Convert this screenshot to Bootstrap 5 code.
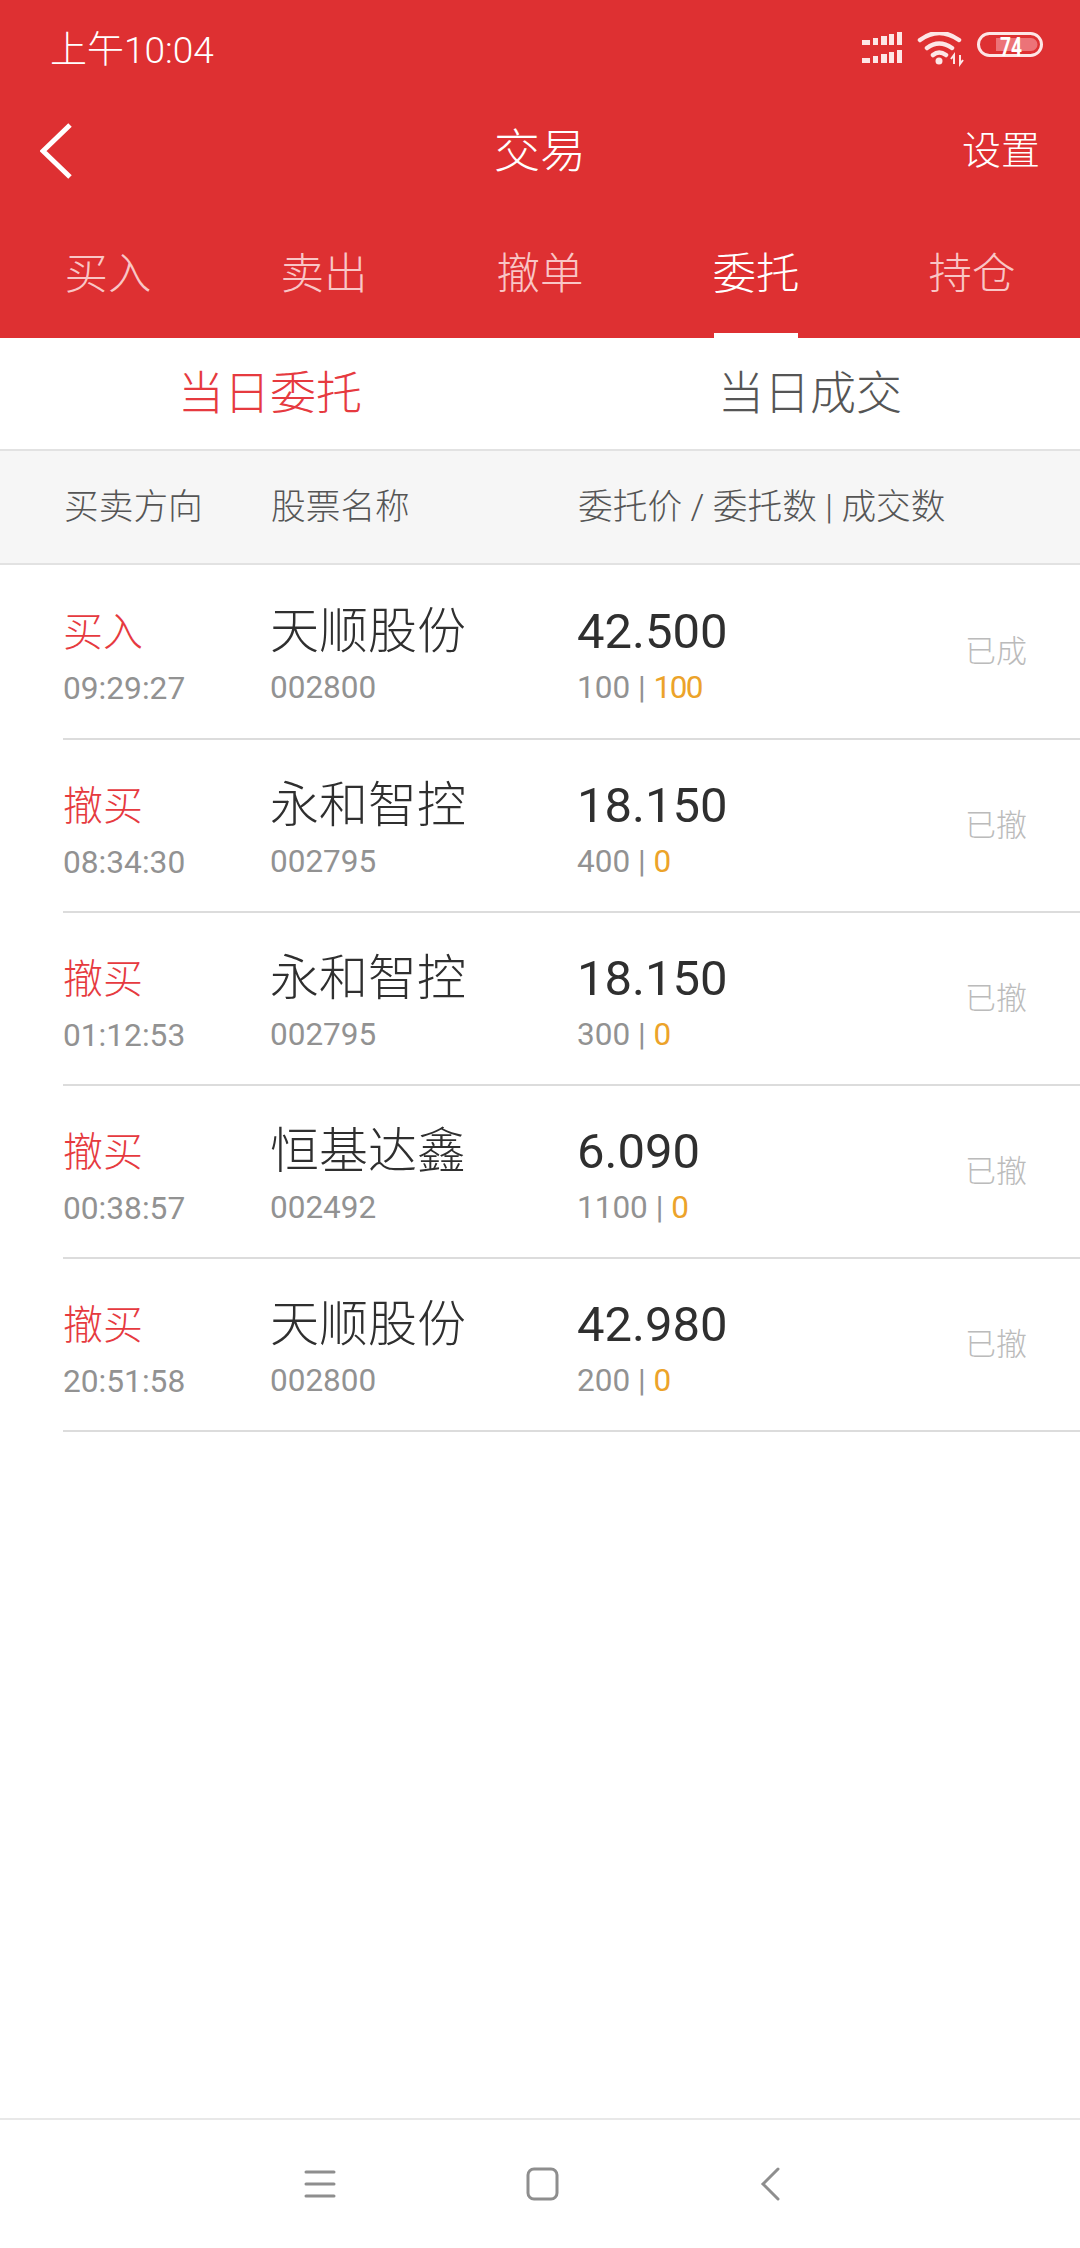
<!DOCTYPE html>
<html lang="zh-CN">
<head>
  <meta charset="UTF-8">
  <meta name="viewport" content="width=device-width, initial-scale=1">
  <title>交易</title>
  <link href="https://cdn.jsdelivr.net/npm/bootstrap@5.3.0/dist/css/bootstrap.min.css" rel="stylesheet">
  <style>
    body { width: 1080px; height: 2248px; overflow: hidden; background: #fff; font-family: Roboto, "Noto Sans CJK SC", sans-serif; font-weight: 300; }
    .app-head { background: #de3032; color: #fff; height: 338px; }
    .status-bar { height: 100px; padding: 0 36px 0 50px; font-size: 37px; line-height: 1; }
    .status-icons { margin-top: 6px; }
    .title-bar { height: 102px; padding: 0 40px; }
    .title-side { width: 200px; }
    .title-text { font-size: 46px; line-height: 1; }
    .title-set { font-size: 39px; line-height: 1; }
    .tab-row { height: 136px; }
    .tab-item { width: 216px; font-size: 43.500px; line-height: 1; color: #f9c6c6; }
    .tab-mark { width: 84px; height: 5px; margin: 37px auto 0; }
    .tab-on { color: #fff; }
    .tab-on .tab-mark { background: #fff; }
    .sub-tabs { height: 113px; border-bottom: 2px solid #e2e2e2; font-size: 46px; color: #555; }
    .sub-on { color: #e63a3f; }
    .col-a { width: 207px; flex: none; padding-top: 13px; }
    .col-b { width: 307px; flex: none; padding-top: 7px; }
    .col-c { flex: 1; padding-top: 7px; }
    .list-head { height: 114px; padding-left: 64px; background: #f6f6f6; border-bottom: 2px solid #e2e2e2; font-size: 34.700px; color: #555; }
    .order-row { height: 173px; margin-left: 63px; border-bottom: 2px solid #dcdcdc; }
    .order-row:first-of-type { height: 175px; }
    .side-text { font-size: 40px; line-height: 48px; color: #e63a3f; }
    .name-text { font-size: 49px; line-height: 58px; color: #2f2f2f; }
    .price-text { font-size: 49px; line-height: 58px; color: #2f2f2f; font-weight: 400; }
    .sub-text { font-size: 31.500px; line-height: 38px; color: #929292; margin-top: 8px; font-weight: 400; }
    .time-text { font-size: 31.700px; margin-top: 13px; }
    .deal-num { color: #eca32a; letter-spacing: -1.500px; }
    .state-text { font-size: 31px; line-height: 1; color: #bbb; width: 119px; padding-right: 53px; flex: none; white-space: nowrap; text-align: right; }
    .soft-bar { height: 130px; border-top: 2px solid #e8e8e8; }
  </style>
</head>
<body class="d-flex flex-column">
  <!-- 顶部红色区域 -->
  <div class="app-head">
    <div class="status-bar d-flex align-items-center justify-content-between">
      <span>上午10:04</span>
      <svg class="status-icons" width="182" height="42" viewBox="0 0 182 42" fill="#fde6e6">
        <!-- 信号 -->
        <rect x="0" y="8" width="8" height="5"/><rect x="11" y="6" width="5" height="7"/><rect x="19" y="4" width="6" height="9"/><rect x="27" y="2" width="5" height="11"/><rect x="35" y="0" width="5" height="13"/>
        <rect x="0" y="26" width="8" height="5"/><rect x="11" y="24" width="5" height="7"/><rect x="19" y="22" width="6" height="9"/><rect x="27" y="20" width="5" height="11"/><rect x="35" y="18" width="5" height="13"/>
        <!-- wifi -->
        <path d="M58 8Q77-6 97 8M65 16Q77 7 90 16M71 23Q77 18 84 23" fill="none" stroke="#fde6e6" stroke-width="4.500" stroke-linecap="round"/>
        <circle cx="77" cy="29" r="3.500"/>
        <path d="M92 32V23L89 27M98 23V32L101 28" fill="none" stroke="#fde6e6" stroke-width="2"/>
        <!-- 电量 -->
        <rect x="116.500" y="1.500" width="63" height="22" rx="11" fill="none" stroke="#fde6e6" stroke-width="3"/>
        <path d="M134 6H169a6.500 6.500 0 0 1 0 13H134Z" fill="#ec7378"/>
        <text x="149" y="24" text-anchor="middle" font-family="Roboto, sans-serif" font-size="25" font-weight="700" fill="#fff" textLength="22" lengthAdjust="spacingAndGlyphs">74</text>
      </svg>
    </div>
    <div class="title-bar d-flex align-items-center justify-content-between">
      <div class="title-side">
        <svg class="d-block" width="34" height="56" viewBox="0 0 34 56"><path d="M30 2 3 28l27 26" fill="none" stroke="#fff" stroke-width="5"/></svg>
      </div>
      <div class="title-text">交易</div>
      <div class="title-side title-set text-end">设置</div>
    </div>
    <div class="tab-row d-flex align-items-end">
      <div class="tab-item text-center">买入<div class="tab-mark"></div></div>
      <div class="tab-item text-center">卖出<div class="tab-mark"></div></div>
      <div class="tab-item text-center">撤单<div class="tab-mark"></div></div>
      <div class="tab-item text-center tab-on">委托<div class="tab-mark"></div></div>
      <div class="tab-item text-center">持仓<div class="tab-mark"></div></div>
    </div>
  </div>

  <!-- 当日委托 / 当日成交 -->
  <div class="sub-tabs d-flex align-items-center text-center">
    <div class="w-50 sub-on">当日委托</div>
    <div class="w-50">当日成交</div>
  </div>

  <div class="list-head d-flex align-items-center">
    <div class="col-a p-0">买卖方向</div>
    <div class="col-b p-0">股票名称</div>
    <div class="col-c p-0">委托价 / 委托数 | 成交数</div>
  </div>

  <!-- 委托列表 -->
  <div class="flex-grow-1">
    <div class="order-row d-flex align-items-center">
      <div class="col-a"><div class="side-text">买入</div><div class="sub-text time-text">09:29:27</div></div>
      <div class="col-b"><div class="name-text">天顺股份</div><div class="sub-text">002800</div></div>
      <div class="col-c"><div class="price-text">42.500</div><div class="sub-text">100 | <span class="deal-num">100</span></div></div>
      <div class="state-text">已成</div>
    </div>
    <div class="order-row d-flex align-items-center">
      <div class="col-a"><div class="side-text">撤买</div><div class="sub-text time-text">08:34:30</div></div>
      <div class="col-b"><div class="name-text">永和智控</div><div class="sub-text">002795</div></div>
      <div class="col-c"><div class="price-text">18.150</div><div class="sub-text">400 | <span class="deal-num">0</span></div></div>
      <div class="state-text">已撤</div>
    </div>
    <div class="order-row d-flex align-items-center">
      <div class="col-a"><div class="side-text">撤买</div><div class="sub-text time-text">01:12:53</div></div>
      <div class="col-b"><div class="name-text">永和智控</div><div class="sub-text">002795</div></div>
      <div class="col-c"><div class="price-text">18.150</div><div class="sub-text">300 | <span class="deal-num">0</span></div></div>
      <div class="state-text">已撤</div>
    </div>
    <div class="order-row d-flex align-items-center">
      <div class="col-a"><div class="side-text">撤买</div><div class="sub-text time-text">00:38:57</div></div>
      <div class="col-b"><div class="name-text">恒基达鑫</div><div class="sub-text">002492</div></div>
      <div class="col-c"><div class="price-text">6.090</div><div class="sub-text">1100 | <span class="deal-num">0</span></div></div>
      <div class="state-text">已撤</div>
    </div>
    <div class="order-row d-flex align-items-center">
      <div class="col-a"><div class="side-text">撤买</div><div class="sub-text time-text">20:51:58</div></div>
      <div class="col-b"><div class="name-text">天顺股份</div><div class="sub-text">002800</div></div>
      <div class="col-c"><div class="price-text">42.980</div><div class="sub-text">200 | <span class="deal-num">0</span></div></div>
      <div class="state-text">已撤</div>
    </div>
  </div>

  <!-- 系统导航键 -->
  <div class="soft-bar d-flex align-items-center justify-content-center">
    <svg width="480" height="36" viewBox="0 0 480 36" fill="none" stroke="#8e8e8e" stroke-linecap="round">
      <path d="M6 6H34M6 18H34M6 30H34" stroke-width="3"/>
      <rect x="228" y="3" width="29" height="30" rx="6" stroke-width="3"/>
      <path d="M478 3 463 18l15 15" stroke-width="3"/>
    </svg>
  </div>
  <script src="https://cdn.jsdelivr.net/npm/bootstrap@5.3.0/dist/js/bootstrap.bundle.min.js"></script>
</body>
</html>
